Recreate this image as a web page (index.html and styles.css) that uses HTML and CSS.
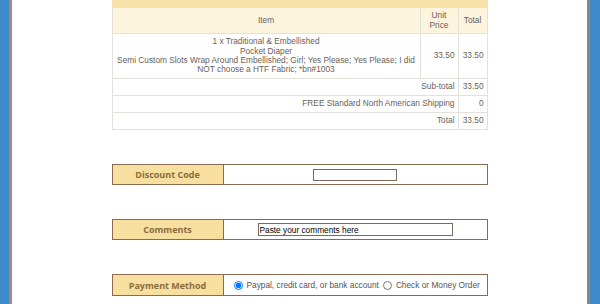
FILE: index.html
```html
<!DOCTYPE html>
<html lang="en">
<head>
    <meta charset="UTF-8">
    <meta name="viewport" content="width=device-width, initial-scale=1.0">
    <title>Checkout</title>
    <link rel="stylesheet" href="styles.css">
</head>
<body>
    <div class="frame">
        <div class="content">
            <table class="order">
                <tr>
                    <th colspan="3" class="title">Ordered Items</th>
                </tr>
                <tr class="head">
                    <td class="col-item">Item</td>
                    <td class="col-price">Unit<br>Price</td>
                    <td class="col-total">Total</td>
                </tr>
                <tr class="line">
                    <td class="center">1 x Traditional &amp; Embellished<br>Pocket Diaper<br>Semi Custom Slots Wrap Around Embellished; Girl; Yes Please; Yes Please; I did NOT choose a HTF Fabric; *bn#1003</td>
                    <td class="num">33.50</td>
                    <td class="num">33.50</td>
                </tr>
                <tr class="sum">
                    <td colspan="2" class="num">Sub-total</td>
                    <td class="num">33.50</td>
                </tr>
                <tr class="sum">
                    <td colspan="2" class="num">FREE Standard North American Shipping</td>
                    <td class="num">0</td>
                </tr>
                <tr class="sum">
                    <td colspan="2" class="num">Total</td>
                    <td class="num">33.50</td>
                </tr>
            </table>

            <div class="box">
                <div class="box-label">Discount Code</div>
                <div class="box-field center-field">
                    <input type="text" class="code-input">
                </div>
            </div>

            <div class="box">
                <div class="box-label">Comments</div>
                <div class="box-field center-field">
                    <input type="text" class="comment-input" value="Paste your comments here">
                </div>
            </div>

            <div class="box box-tall">
                <div class="box-label">Payment Method</div>
                <div class="box-field radios">
                    <label><input type="radio" name="pay" checked> Paypal, credit card, or bank account</label>
                    <label><input type="radio" name="pay"> Check or Money Order</label>
                </div>
            </div>
        </div>
    </div>
</body>
</html>
```

FILE: styles.css
```css
body {
    margin: 0;
    background: #3f8acb;
    height: 304px;
    overflow: hidden;
    display: flex;
}

.frame {
    flex: 1;
    margin: 0 10px 0 9px;
    border-left: 3px solid #a8887a;
    border-right: 3px solid #8c8680;
    background: #fff;
    overflow: hidden;
}

.content {
    width: 376px;
    margin: 0 auto;
}

/* order table */
.order {
    width: 376px;
    margin-top: -13px;
    border-collapse: collapse;
    font-family: "Liberation Sans", Arial, sans-serif;
    font-size: 8.3px;
    color: #6a6058;
}

.order td,
.order th {
    border: 1px solid #e4e0da;
    padding: 0 3px;
    line-height: 9.4px;
}

.order .title {
    height: 19px;
    background: #f6e2a8;
    border-color: #f6e2a8;
    color: #8a6a3a;
    font-weight: bold;
    text-align: center;
}

.head td {
    background: #fdf4de;
    height: 25px;
    text-align: center;
}

.col-price {
    width: 31px;
}

.col-total {
    width: 22px;
}

.line td {
    height: 44px;
}

.line .center {
    padding: 0 4px;
}

.sum td {
    height: 16px;
}

.center {
    text-align: center;
}

.num {
    text-align: right;
}

/* form boxes */
.box {
    display: flex;
    height: 19px;
    margin-top: 34px;
    border: 1px solid #8a6a50;
}

.box-tall {
    height: 20px;
}

.box-label {
    width: 110px;
    flex-shrink: 0;
    background: #f6df9f;
    border-right: 1px solid #8a6a50;
    display: flex;
    align-items: center;
    justify-content: center;
    font-family: "Open Sans", sans-serif;
    font-weight: bold;
    font-size: 9px;
    color: #8c6c3c;
}

.box-field {
    flex: 1;
    display: flex;
    align-items: center;
}

.center-field {
    justify-content: center;
}

.code-input {
    width: 84px;
    height: 12px;
    box-sizing: border-box;
    border: 1px solid #7a6a60;
    padding: 0;
    margin: 0;
}

.comment-input {
    width: 195px;
    height: 13px;
    box-sizing: border-box;
    border: 1px solid #7a6a60;
    padding: 0 1px;
    margin: 0;
    font-family: "Liberation Sans", Arial, sans-serif;
    font-size: 8.3px;
    color: #000;
}

.radios {
    padding-left: 10px;
    gap: 4px;
    white-space: nowrap;
    font-family: "Liberation Sans", Arial, sans-serif;
    font-size: 8.3px;
    color: #555;
}

.radios label {
    display: flex;
    align-items: center;
    gap: 4px;
}

.radios input {
    width: 9px;
    height: 9px;
    margin: 0;
}
```
